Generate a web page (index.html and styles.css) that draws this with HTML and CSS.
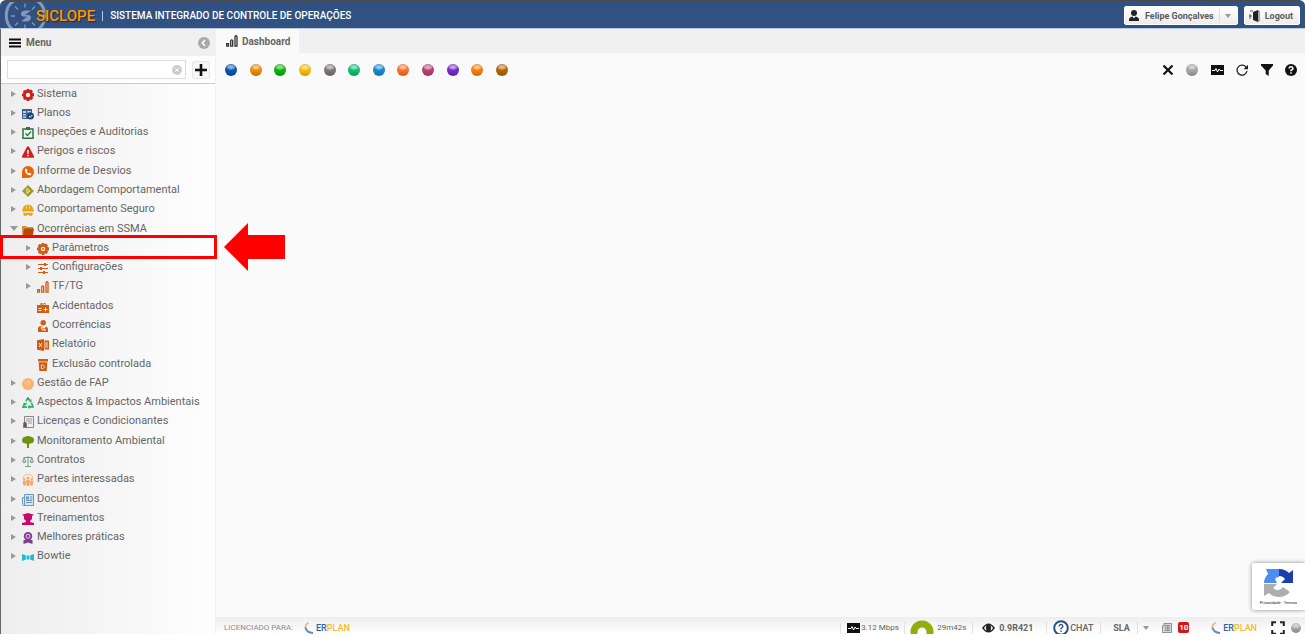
FILE: index.html
```html
<!DOCTYPE html>
<html lang="pt-BR">
<head>
<meta charset="utf-8">
<meta name="viewport" content="width=device-width, initial-scale=1">
<title>SICLOPE</title>
<link rel="stylesheet" href="styles.css">
</head>
<body>
<svg class="defs" aria-hidden="true">
  <symbol id="gear" viewBox="0 0 12 12"><path fill="currentColor" fill-rule="evenodd" d="M4.8 0h2.4l.4 1.3 1.6-.7 1.7 1.7-.7 1.5 1.8.8v2.6l-1.6.5.7 1.6-1.7 1.8-1.6-.7-.6 1.6H4.8l-.5-1.5-1.6.6L1 9.300l.6-1.6L0 7.200V4.800l1.500-.5L.9 2.600 2.600.9l1.600.6zM6 3.800a2.200 2.200 0 1 0 0 4.400 2.200 2.200 0 0 0 0-4.400z"/></symbol>
  <symbol id="gear2" viewBox="0 0 12 12"><use href="#gear"/><circle cx="6" cy="6" r="1" fill="currentColor"/></symbol>
  <symbol id="plan" viewBox="0 0 12 12"><path fill="#3f6191" d="M0 1h10v10H0z"/><path fill="#b9cbe0" d="M1 3h3v2H1zM5 3h4v1.500H5zM1 6h3v1.500H1zM1 8.500h3V10H1z"/><circle cx="8.500" cy="8" r="3.500" fill="#20457c"/><path d="M7 8l1.300 1.300L10.300 7" stroke="#fff" fill="none"/></symbol>
  <symbol id="clip" viewBox="0 0 12 12"><path d="M1 2h10v9.300H1z" fill="#eef5ee" stroke="#2c7345" stroke-width="1.500"/><path d="M4 0h4v3H4z" fill="#2c7345"/><path d="M3.500 6.500l2 2 3.500-4" stroke="#2c7345" stroke-width="1.300" fill="none"/></symbol>
  <symbol id="warn" viewBox="0 0 12 12"><path fill="#d01f1c" d="M5 .8q1-1.300 2 0l5 9.400q.4 1.600-1 1.600H1q-1.400 0-1-1.600z"/><path stroke="#fff" stroke-width="1.500" d="M6 4v3.700M6 8.800v1.400"/></symbol>
  <symbol id="phone" viewBox="0 0 12 12"><circle cx="6" cy="6" r="6" fill="#ea6100"/><path fill="#ea6100" d="M0 7v5h5z"/><path fill="#fff" d="M3 3.300l1.300-.8 1.200 2-.8.900q.7 1.400 1.900 1.900l.9-.8 2 1.300-.9 1.500C5.800 9.800 2.500 6.500 3 3.300z"/></symbol>
  <symbol id="diamond" viewBox="0 0 12 12"><path fill="#a09b29" d="M6 0l6 6-6 6-6-6z"/><path fill="none" stroke="#ecebb8" d="M5 3v6M5 4l3 2-3 2"/></symbol>
  <symbol id="helmet" viewBox="0 0 12 12"><path fill="#eba316" d="M.7 6C.7 2.500 3 .8 6 .8S11.300 2.500 11.300 6H12v1.600H0V6zM1 8.800h10l-.8 3H7.500L6 10.600l-1.500 1.200H1.800z"/><path stroke="#f8cf7e" d="M4.500 2v3M7.500 2v3"/></symbol>
  <symbol id="folder" viewBox="0 0 12 12"><path fill="#da8a46" d="M0 11V2h4l1 1h6v3H3z"/><path fill="#b64c00" d="M2.500 4.500H12l-1 6.500H.7z"/></symbol>
  <symbol id="sliders" viewBox="0 0 12 12"><path stroke="currentColor" d="M1 2.500h10M1 6.500h10M1 10.500h10"/><path fill="currentColor" d="M7 1h2v3H7zM3 5h2v3H3zM6 9h2v3H6z"/></symbol>
  <symbol id="bars" viewBox="0 0 12 12"><path fill="none" stroke="currentColor" stroke-width="1.300" d="M.7 8.700h1.800v2.500H.7zM4.700 5.700Q5.700 4.200 6.700 5.700v5.500h-2zM9 1.500q1-1.500 2 0v9.700H9z"/></symbol>
  <symbol id="kit" viewBox="0 0 12 12"><path fill="currentColor" d="M0 4h3.500V2h5v2H12v8H0z"/><path d="M4.700 3h2.600v1M1.500 7.500h3M1.500 9.500h3M8.500 6.500v4M6.500 8.500h4" stroke="#fbe6d7" fill="none"/></symbol>
  <symbol id="person" viewBox="0 0 12 12"><circle cx="6.200" cy="2.800" r="2.700" fill="currentColor"/><path fill="currentColor" d="M1 12V8q.5-2 3-2l3 3 2-2.500q2 .5 2 2.500v3z"/><path d="M4 7l1.500 3H9" stroke="#fff" fill="none"/></symbol>
  <symbol id="xls" viewBox="0 0 12 12"><path fill="currentColor" d="M0 1.200L7 0v12l-7-1.200zM7.500 1.500H12v9H7.500z"/><path d="M2 4l3 4M5 4L2 8M8 4h3M8 6h3M8 8h3" stroke="#fbe6d7"/></symbol>
  <symbol id="trash" viewBox="0 0 12 12"><path fill="currentColor" d="M1 0h10v2.500H1zM1.700 3.300h8.600L9.700 12H2.300z"/><path d="M4.300 9.500V6h2l1.500 1.700-1.500 1.800z" stroke="#fbd2b5" fill="none"/></symbol>
  <symbol id="gauge" viewBox="0 0 12 12"><circle cx="6" cy="6" r="6" fill="#fdb070"/><path d="M3 6.500A3.200 3.200 0 0 1 8 4M5.500 7l3-2.500" stroke="#ffe3c8" fill="none" stroke-width=".8"/></symbol>
  <symbol id="recycle" viewBox="0 0 12 12"><path d="M3.800 4L6 .9l2 2.900M9.300 5.500l1.700 4.300H7M5 10.200H1L3 6" fill="none" stroke="#22b36e" stroke-width="1.700"/><path fill="#22b36e" d="M6.500 4.500L9.500 5V2zM7.800 7.800v4.200l-2.300-2zM.8 6.500l4-.9-.5 3z"/></symbol>
  <symbol id="cert" viewBox="0 0 12 12"><path fill="#eee" stroke="#8a8587" d="M2.500.5h9v11h-9z"/><path stroke="#a09a9d" d="M4 3h6M4 5h6M6 7h4"/><circle cx="3" cy="8" r="1.900" fill="#6b555e"/><path fill="#6b555e" d="M1.200 9h3.600v3L3 11l-1.800 1z"/></symbol>
  <symbol id="tree" viewBox="0 0 12 12"><path fill="#6f9210" d="M3 .8q3-1.500 6 0 3 .7 3 3.200 0 3.700-4.500 3.500L7 9v3H5V9L4.500 7.500Q0 7.700 0 4 .3 1.300 3 .8z"/></symbol>
  <symbol id="scale" viewBox="0 0 12 12"><path fill="none" stroke="#7b9c8a" d="M6 1v10M3 11.500h6M1.500 2.500h9M2.200 3L.5 7M2.200 3L4 7M9.800 3L8 7M9.800 3l1.700 4"/><path fill="#7b9c8a" d="M0 6.500h4.500Q2.300 10 0 6.500zM7.500 6.500H12Q9.700 10 7.500 6.500z"/></symbol>
  <symbol id="people" viewBox="0 0 12 12"><path d="M1 5A5 5 0 0 1 11 5" stroke="#fab57d" fill="none"/><g fill="#f9a35d"><circle cx="6" cy="4" r="1.500"/><circle cx="2.300" cy="5.500" r="1.200"/><circle cx="9.700" cy="5.500" r="1.200"/><path d="M4.300 6h3.400v3.500L7 12H5l-.7-2.500zM.5 7h3.300v4.500H1.500zM8.200 7h3.300l-1 4.500H8.200z"/></g></symbol>
  <symbol id="news" viewBox="0 0 12 12"><path fill="#d9e6f0" stroke="#6b98bf" d="M2.500.5h9v11h-10q-1 0-1-1v-7h2z"/><path stroke="#6b98bf" d="M2.500 3v8M4 6.500h6M4 8.500h6M8 3h2.500M8 5h2.500"/><path fill="#6b98bf" d="M4 2.500h3v3H4z"/></symbol>
  <symbol id="grad" viewBox="0 0 12 12"><path fill="#c8086c" d="M0 1.700L6 0l6 1.700L10 3v3L8 8v1l4 1v2H0v-2l4-1V8L2 6V3z"/></symbol>
  <symbol id="badge" viewBox="0 0 12 12"><circle cx="6" cy="4.200" r="4.200" fill="#7d3d8c"/><path fill="#7d3d8c" d="M1.500 8h9v4L6 10.500 1.500 12z"/><circle cx="6" cy="4.200" r="2" fill="none" stroke="#e7d5eb"/></symbol>
  <symbol id="bow" viewBox="0 0 12 12"><path fill="#1fbcd4" d="M0 3l4 1.500h4L12 3v7L8 8.500H4L0 10z"/><path stroke="#d5f4f8" d="M4.300 4v5M7.700 4v5" stroke-width=".8"/></symbol>
  <symbol id="pulse" viewBox="0 0 13 10"><path d="M0 0h13v10H0z" fill="#111"/><path d="M1 5.500h3l1-2 1.500 3.500L8 4l1 1.500h3" fill="none" stroke="#fff"/></symbol>
  <symbol id="swirl" viewBox="0 0 12 12"><path d="M5 .8Q1 2 1.400 6" fill="none" stroke="#f3b778" stroke-width="1.700"/><path d="M1.400 5.500Q2.500 10.500 9 11" fill="none" stroke="#6689b8" stroke-width="1.900"/></symbol>
</svg>

<div class="app">
  <header class="topbar">
    <svg class="eye" viewBox="0 0 42 26" aria-hidden="true"><g fill="none" stroke="#8298bd"><path d="M12-3A18 18 0 0 0 12 29M31-3A18 18 0 0 1 31 29" stroke-width="3"/><path d="M21 1v4M21 22v4M7 13.500h4M34 13.500h4M11 4l3 3M31 4l-3 3M11 23l3-3M31 23l-3-3" stroke-width="1.300"/></g><path fill="#8298bd" d="M27 8h-5q-5 0-5 3.500 0 2 2 2.500h4l-6 5h5q5 0 5-4 0-2-2-2.500h-4z"/></svg>
    <h1 class="brand">SICLOPE</h1>
    <span class="bar"></span>
    <span class="system">SISTEMA INTEGRADO DE CONTROLE DE OPERAÇÕES</span>
    <div class="account">
      <button class="chip user" type="button"><svg class="i12" viewBox="0 0 12 12"><circle cx="6" cy="3" r="3" fill="#222"/><path fill="#222" d="M1 11V9q1-2.500 3.500-2.500L6 8.500l1.500-2Q10 6.500 11 9v2z"/></svg>Felipe Gonçalves<span class="split"><span class="caret"></span></span></button>
      <button class="chip" type="button"><svg class="i12" viewBox="0 0 12 12"><path fill="#222" d="M5 2l5-2v12l-5-2z"/><path d="M2 1h3M9.500 1H11v10H9M1 6h3M2 4v5" fill="none" stroke="#555"/></svg>Logout</button>
    </div>
  </header>

  <div class="body">
    <aside class="sidebar">
      <div class="menuhead"><svg class="i12" viewBox="0 0 12 12"><path stroke="#111" stroke-width="1.800" d="M0 2.500h12M0 6h12M0 9.500h12"/></svg><h2>Menu</h2>
        <button class="plain push" type="button" aria-label="Recolher menu"><svg class="i12" viewBox="0 0 12 12"><circle cx="6" cy="6" r="6" fill="#a9a9a9"/><path d="M7 3L4.300 6 7 9" stroke="#fff" stroke-width="1.600" fill="none"/></svg></button></div>
      <form class="search">
        <div class="field"><input type="text" aria-label="Buscar no menu"><button class="plain clear" type="reset" aria-label="Limpar"><svg class="i10" viewBox="0 0 12 12"><circle cx="6" cy="6" r="6" fill="#ccc"/><path d="M4 4l4 4M8 4l-4 4" stroke="#fff" stroke-width="1.200"/></svg></button></div>
        <button class="add" type="button" aria-label="Adicionar"><svg class="i12" viewBox="0 0 12 12"><path d="M6 0v12M0 6h12" stroke="#111" stroke-width="2.600"/></svg></button>
      </form>
      <ul class="tree" role="tree">
        <li role="treeitem" aria-level="1"><i class="tw"></i><svg class="i12 red"><use href="#gear"/></svg><span>Sistema</span></li>
        <li role="treeitem" aria-level="1"><i class="tw"></i><svg class="i12"><use href="#plan"/></svg><span>Planos</span></li>
        <li role="treeitem" aria-level="1"><i class="tw"></i><svg class="i12"><use href="#clip"/></svg><span>Inspeções e Auditorias</span></li>
        <li role="treeitem" aria-level="1"><i class="tw"></i><svg class="i12"><use href="#warn"/></svg><span>Perigos e riscos</span></li>
        <li role="treeitem" aria-level="1"><i class="tw"></i><svg class="i12"><use href="#phone"/></svg><span>Informe de Desvios</span></li>
        <li role="treeitem" aria-level="1"><i class="tw"></i><svg class="i12"><use href="#diamond"/></svg><span>Abordagem Comportamental</span></li>
        <li role="treeitem" aria-level="1"><i class="tw"></i><svg class="i12"><use href="#helmet"/></svg><span>Comportamento Seguro</span></li>
        <li role="treeitem" aria-level="1" aria-expanded="true"><i class="tw open"></i><svg class="i12"><use href="#folder"/></svg><span>Ocorrências em SSMA</span></li>
        <li role="treeitem" aria-level="2" class="sub marked"><i class="tw"></i><svg class="i12"><use href="#gear2"/></svg><span>Parâmetros</span>
          <svg class="pointer" viewBox="0 0 61 48" aria-hidden="true"><path fill="#f00" d="M0 24L24 0v12h37v24H24v12z"/></svg></li>
        <li role="treeitem" aria-level="2" class="sub"><i class="tw"></i><svg class="i12"><use href="#sliders"/></svg><span>Configurações</span></li>
        <li role="treeitem" aria-level="2" class="sub"><i class="tw"></i><svg class="i12"><use href="#bars"/></svg><span>TF/TG</span></li>
        <li role="treeitem" aria-level="2" class="sub"><i class="tw leaf"></i><svg class="i12"><use href="#kit"/></svg><span>Acidentados</span></li>
        <li role="treeitem" aria-level="2" class="sub"><i class="tw leaf"></i><svg class="i12"><use href="#person"/></svg><span>Ocorrências</span></li>
        <li role="treeitem" aria-level="2" class="sub"><i class="tw leaf"></i><svg class="i12"><use href="#xls"/></svg><span>Relatório</span></li>
        <li role="treeitem" aria-level="2" class="sub"><i class="tw leaf"></i><svg class="i12"><use href="#trash"/></svg><span>Exclusão controlada</span></li>
        <li role="treeitem" aria-level="1"><i class="tw"></i><svg class="i12"><use href="#gauge"/></svg><span>Gestão de FAP</span></li>
        <li role="treeitem" aria-level="1"><i class="tw"></i><svg class="i12"><use href="#recycle"/></svg><span>Aspectos &amp; Impactos Ambientais</span></li>
        <li role="treeitem" aria-level="1"><i class="tw"></i><svg class="i12"><use href="#cert"/></svg><span>Licenças e Condicionantes</span></li>
        <li role="treeitem" aria-level="1"><i class="tw"></i><svg class="i12"><use href="#tree"/></svg><span>Monitoramento Ambiental</span></li>
        <li role="treeitem" aria-level="1"><i class="tw"></i><svg class="i12"><use href="#scale"/></svg><span>Contratos</span></li>
        <li role="treeitem" aria-level="1"><i class="tw"></i><svg class="i12"><use href="#people"/></svg><span>Partes interessadas</span></li>
        <li role="treeitem" aria-level="1"><i class="tw"></i><svg class="i12"><use href="#news"/></svg><span>Documentos</span></li>
        <li role="treeitem" aria-level="1"><i class="tw"></i><svg class="i12"><use href="#grad"/></svg><span>Treinamentos</span></li>
        <li role="treeitem" aria-level="1"><i class="tw"></i><svg class="i12"><use href="#badge"/></svg><span>Melhores práticas</span></li>
        <li role="treeitem" aria-level="1"><i class="tw"></i><svg class="i12"><use href="#bow"/></svg><span>Bowtie</span></li>
      </ul>
    </aside>

    <main class="main">
      <nav class="tabs"><button class="tab" type="button"><svg class="i12"><use href="#bars"/></svg>Dashboard</button></nav>
      <div class="tools">
        <div class="orbs">
          <button class="orb blue" type="button" aria-label="Painel 1"></button><button class="orb amber" type="button" aria-label="Painel 2"></button><button class="orb green" type="button" aria-label="Painel 3"></button><button class="orb yellow" type="button" aria-label="Painel 4"></button><button class="orb gray" type="button" aria-label="Painel 5"></button><button class="orb mint" type="button" aria-label="Painel 6"></button><button class="orb sky" type="button" aria-label="Painel 7"></button><button class="orb coral" type="button" aria-label="Painel 8"></button><button class="orb rose" type="button" aria-label="Painel 9"></button><button class="orb violet" type="button" aria-label="Painel 10"></button><button class="orb orange" type="button" aria-label="Painel 11"></button><button class="orb brown" type="button" aria-label="Painel 12"></button>
        </div>
        <div class="actions">
          <button class="plain" type="button" aria-label="Fechar"><svg class="i12" viewBox="0 0 12 12"><path d="M1.500 1.500l9 9M10.500 1.500l-9 9" stroke="#111" stroke-width="2.200"/></svg></button>
          <button class="orb silver" type="button" aria-label="Estado"></button>
          <button class="plain" type="button" aria-label="Monitor"><svg class="wide"><use href="#pulse"/></svg></button>
          <button class="plain" type="button" aria-label="Atualizar"><svg class="i12" viewBox="0 0 12 12"><path d="M10.300 3.500A5 5 0 1 0 11 7" stroke="#222" stroke-width="1.300" fill="none"/><path fill="#222" d="M12 .8v4.400H7.500z"/></svg></button>
          <button class="plain" type="button" aria-label="Filtrar"><svg class="i12" viewBox="0 0 12 12"><path fill="#111" d="M0 0h12v1.500L7.700 6.500V12L4.700 10V6.500L0 1.500z"/></svg></button>
          <button class="plain" type="button" aria-label="Ajuda"><svg class="i12" viewBox="0 0 12 12"><circle cx="6" cy="6" r="6" fill="#111"/><path d="M4 4.500Q4.200 2.800 6 2.800T8 4.500Q8 5.500 6 6.300v1M6 8.200v1.500" stroke="#fff" stroke-width="1.500" fill="none"/></svg></button>
        </div>
      </div>
      <div class="canvas"></div>
      <footer class="status">
        <span class="licensed">LICENCIADO PARA:</span>
        <span class="erplan"><svg class="i12"><use href="#swirl"/></svg><span><b>ER</b>PLAN</span></span>
        <div class="info">
          <span class="cell speed"><svg class="wide"><use href="#pulse"/></svg>3.12 Mbps</span>
          <span class="cell time"><svg class="arc" viewBox="0 0 24 16"><path d="M4 16v-4a8 8 0 0 1 16 0v4" fill="none" stroke="#93ae0c" stroke-width="7"/></svg>29m42s</span>
          <span class="cell version"><svg class="wide" viewBox="0 0 13 10"><path d="M0 5Q6.500-4 13 5 6.500 14 0 5z" fill="#222"/><path d="M2 5q1-2 2.500-2.500Q3 5 4.500 7.500 3 7 2 5zM11 5q-1-2-2.500-2.500Q10 5 8.500 7.500 10 7 11 5z" fill="#fff"/></svg>0.9R421</span>
          <button class="cell plain chat" type="button"><svg class="i16" viewBox="0 0 16 16"><circle cx="8" cy="8" r="6.800" fill="#fff" stroke="#2b5088" stroke-width="2"/><path d="M6 6.500Q6.200 4.500 8 4.500t2 2Q10 7.500 8 8.400v1.200M8 10.600v1.500" stroke="#2b5088" stroke-width="1.300" fill="none"/></svg>CHAT</button>
          <button class="cell plain sla" type="button">SLA<span class="split"><span class="caret"></span></span></button>
          <span class="alerts"><svg class="i10" viewBox="0 0 12 12"><path fill="#ddd" stroke="#777" d="M2.500.5h9v11H.500v-8h2z"/><path stroke="#888" d="M3 3h7M3 5h7M3 7h7M3 9h7M7 2v8"/></svg><span class="count">10</span></span>
          <span class="erplan"><svg class="i12"><use href="#swirl"/></svg><span><b>ER</b>PLAN</span></span>
          <button class="plain full" type="button" aria-label="Tela cheia"><svg class="i14" viewBox="0 0 14 14"><path d="M5 1.200H1.200V5M9 1.200h3.800V5M5 12.800H1.200V9M9 12.800h3.800V9" stroke="#222" stroke-width="2" fill="none"/></svg></button>
          <span class="orb silver small"></span>
        </div>
      </footer>
    </main>
  </div>
</div>

<div class="captcha">
  <svg class="rc" viewBox="0 0 30 30"><path fill="#4c8df0" d="M0 15Q0 10 4 6L2 1h13v8q-3 0-4 2l2 4z"/><path fill="#1c3ea8" d="M15 1q6 0 10 4l4-3v13H17l4-4q-2-3-6-3z"/><path fill="#adadad" d="M0 16h13l-4 4q6 5 10-1l7 5q-4 5-12 5-5 0-9-4l-5 3z"/></svg>
  <div class="rclinks"><a href="#">Privacidade</a> - <a href="#">Termos</a></div>
</div>
</body>
</html>
```

FILE: styles.css
```css
* { box-sizing: border-box; }

html, body { height: 100%; margin: 0; }

body {
  font-family: Roboto, "Liberation Sans", sans-serif;
  font-size: 11px;
  color: #666;
  background: #fff;
}

h1, h2, ul { margin: 0; padding: 0; }
button, input { font: inherit; color: inherit; }
svg { display: block; flex: none; }

.defs { position: absolute; width: 0; height: 0; }
.i10 { width: 10px; height: 10px; }
.i12 { width: 12px; height: 12px; }
.i14 { width: 14px; height: 14px; }
.i16 { width: 16px; height: 16px; }
.wide { width: 13px; height: 10px; }

.app {
  display: flex;
  flex-direction: column;
  height: 100vh;
  padding-bottom: 3px;
}

/* Top bar */
.topbar {
  display: flex;
  align-items: center;
  height: 29px;
  padding: 2px 5px 0 0;
  background: #305182;
  border-top: 1px solid #4b4b4b;
  border-bottom: 1px solid #bccbe2;
  border-radius: 6px 6px 0 0;
  overflow: hidden;
}

.eye { width: 42px; height: 27px; margin-left: 4px; margin-right: -10px; }

.brand {
  font-size: 15px;
  font-weight: 500;
  color: #f90;
  text-shadow: 1px 1px 1px #1b2438;
}

.bar { width: 1px; height: 10px; margin: 0 7px; background: #b9c6da; }
.system { font-size: 10px; font-weight: 500; color: #fff; white-space: nowrap; }
.account { display: flex; gap: 6px; margin-left: auto; }

.chip {
  display: flex;
  align-items: center;
  gap: 5px;
  height: 19px;
  padding: 0 6px 0 3px;
  border: 1px solid #fff;
  border-radius: 2px;
  background: linear-gradient(#fff, #ececec);
  font-size: 9px;
  font-weight: 700;
  color: #5c5c5c;
}

.split {
  display: flex;
  align-items: center;
  height: 13px;
  padding-left: 5px;
  border-left: 1px solid #ddd;
}

.caret {
  border: 3px solid transparent;
  border-top: 4px solid #999;
  border-bottom: 0;
}

.body { display: flex; flex: 1; min-height: 0; }

/* Sidebar */
.sidebar {
  display: flex;
  flex-direction: column;
  flex: none;
  width: 216px;
  border-left: 1px solid #666;
  border-right: 1px solid #f1f1f1;
  background: linear-gradient(90deg, #eee, #fefefe);
}

.menuhead {
  display: flex;
  align-items: center;
  gap: 5px;
  height: 27px;
  padding: 0 5px 0 8px;
  background: #f0f0f0;
}

.menuhead h2 { font-size: 10px; font-weight: 700; }
.push { margin-left: auto; }

.plain {
  display: flex;
  align-items: center;
  padding: 0;
  border: 0;
  background: none;
}

.search {
  display: flex;
  align-items: center;
  gap: 6px;
  height: 28px;
  padding: 0 5px 0 6px;
  background: #fdfdfd;
  border-bottom: 1px solid #ccc;
}

.field {
  display: flex;
  align-items: center;
  flex: 1;
  height: 19px;
  padding-right: 3px;
  border: 1px solid #ddd;
  background: #fff;
}

.field input { flex: 1; min-width: 0; border: 0; outline: 0; padding: 0 4px; background: none; }

.add {
  display: grid;
  place-items: center;
  width: 18px;
  height: 18px;
  padding: 0;
  border: 1px solid #e6e6e6;
  border-radius: 2px;
  background: #f6f6f6;
}

.tree {
  display: grid;
  grid-auto-rows: 1fr;
  height: 482px;
  list-style: none;
}

.tree li {
  position: relative;
  display: flex;
  align-items: center;
  gap: 3px;
  padding-left: 9px;
  padding-bottom: 1px;
  white-space: nowrap;
}

.tree li.sub { padding-left: 24px; }
.tree li > .i12 { margin-top: 3px; color: #cf5c10; }
.tree li > .red { color: #cf1d1d; }

.tw { width: 9px; height: 6px; margin-top: 1px; }
.tw::before {
  content: "";
  display: block;
  width: 0;
  margin-left: 1px;
  border: 3px solid transparent;
  border-left: 5px solid #999;
  border-right: 0;
}
.tw.open::before {
  margin-left: 0;
  border: 4px solid transparent;
  border-top: 5px solid #999;
  border-bottom: 0;
}
.tw.leaf::before { display: none; }

.marked::before {
  content: "";
  position: absolute;
  inset: -3px -2px -1px -1px;
  border: 3px solid #f00;
}

.pointer {
  position: absolute;
  left: 223px;
  top: -15px;
  width: 61px;
  height: 48px;
}

/* Workspace */
.main {
  display: flex;
  flex-direction: column;
  flex: 1;
  min-width: 0;
  background: #fafafa;
}

.tabs { height: 24px; background: #f0f0f0; }

.tab {
  display: flex;
  align-items: center;
  gap: 4px;
  height: 24px;
  padding: 0 9px 0 10px;
  border: 0;
  background: #fafafa;
  font-size: 10px;
  font-weight: 700;
}
.tab .i12 { color: #333; }

.tools {
  display: flex;
  align-items: center;
  justify-content: space-between;
  height: 34px;
  padding: 0 8px 0 9px;
}

.orbs, .actions { display: flex; align-items: center; justify-content: space-between; }
.orbs { width: 283px; }
.actions { width: 135px; }

.orb {
  --c: #aaa;
  width: 12px;
  height: 12px;
  padding: 0;
  border: 0;
  border-radius: 50%;
  background:
    radial-gradient(ellipse 5px 3px at 50% 25%, #ffffffaa, #ffffff55 80%, transparent),
    linear-gradient(#0002, transparent 50%, #0003),
    var(--c);
}
.small { width: 10px; height: 10px; }
.blue { --c: #0759b2; }
.amber { --c: #f08c08; }
.green { --c: #06b80b; }
.yellow { --c: #fcc000; }
.gray { --c: #807878; }
.mint { --c: #0fc26e; }
.sky { --c: #168bd3; }
.coral { --c: #ff7329; }
.rose { --c: #bd4277; }
.violet { --c: #7929cf; }
.orange { --c: #fb8108; }
.brown { --c: #b66800; }
.silver { --c: #a8a8a8; }

.canvas { flex: 1; }

/* Status bar */
.status {
  display: flex;
  align-items: center;
  height: 17px;
  padding: 4px 4px 0 8px;
  background: linear-gradient(#eee, #fff);
  font-size: 8px;
  white-space: nowrap;
  overflow: hidden;
}

.licensed { width: 80px; color: #8c8c8c; }
.erplan { display: flex; align-items: center; font-size: 9px; font-weight: 500; color: #fcb92c; }
.erplan b { font-weight: 500; color: #2e62a8; }

.info { display: flex; align-items: center; margin-left: auto; }
.cell { display: flex; align-items: center; flex: none; height: 12px; border-left: 1px solid #e2e2e2; }
.speed { width: 64px; padding-left: 6px; gap: 1px; }
.time { width: 68px; padding-left: 5px; gap: 3px; }
.arc { width: 24px; height: 16px; }
.version { width: 74px; padding-left: 9px; gap: 4px; font-size: 9px; font-weight: 700; }
.chat { width: 54px; padding-left: 6px; gap: 1px; border-left: 1px solid #e2e2e2; font-size: 9px; font-weight: 500; }
.sla { width: 62px; padding-left: 12px; border-left: 1px solid #e2e2e2; font-size: 9px; font-weight: 700; }
.sla .split { margin-left: 7px; }
.alerts { display: flex; align-items: center; gap: 6px; width: 49px; }

.count {
  padding: 0 1px;
  border-radius: 2px;
  background: #d3151b;
  color: #fff;
  font-size: 8px;
  font-weight: 700;
  line-height: 11px;
}

.full { margin: 0 6px 0 14px; }

/* reCAPTCHA badge */
.captcha {
  position: absolute;
  right: 0;
  bottom: 27px;
  display: flex;
  flex-direction: column;
  align-items: center;
  gap: 2px;
  width: 53px;
  height: 47px;
  padding-top: 5px;
  background: #fff;
  border-radius: 2px 0 0 2px;
  box-shadow: 0 0 4px #888;
}

.rc { width: 30px; height: 30px; }
.rclinks { font-size: 4px; line-height: 6px; color: #222; white-space: nowrap; }
.rclinks a { color: inherit; text-decoration: none; }
```
